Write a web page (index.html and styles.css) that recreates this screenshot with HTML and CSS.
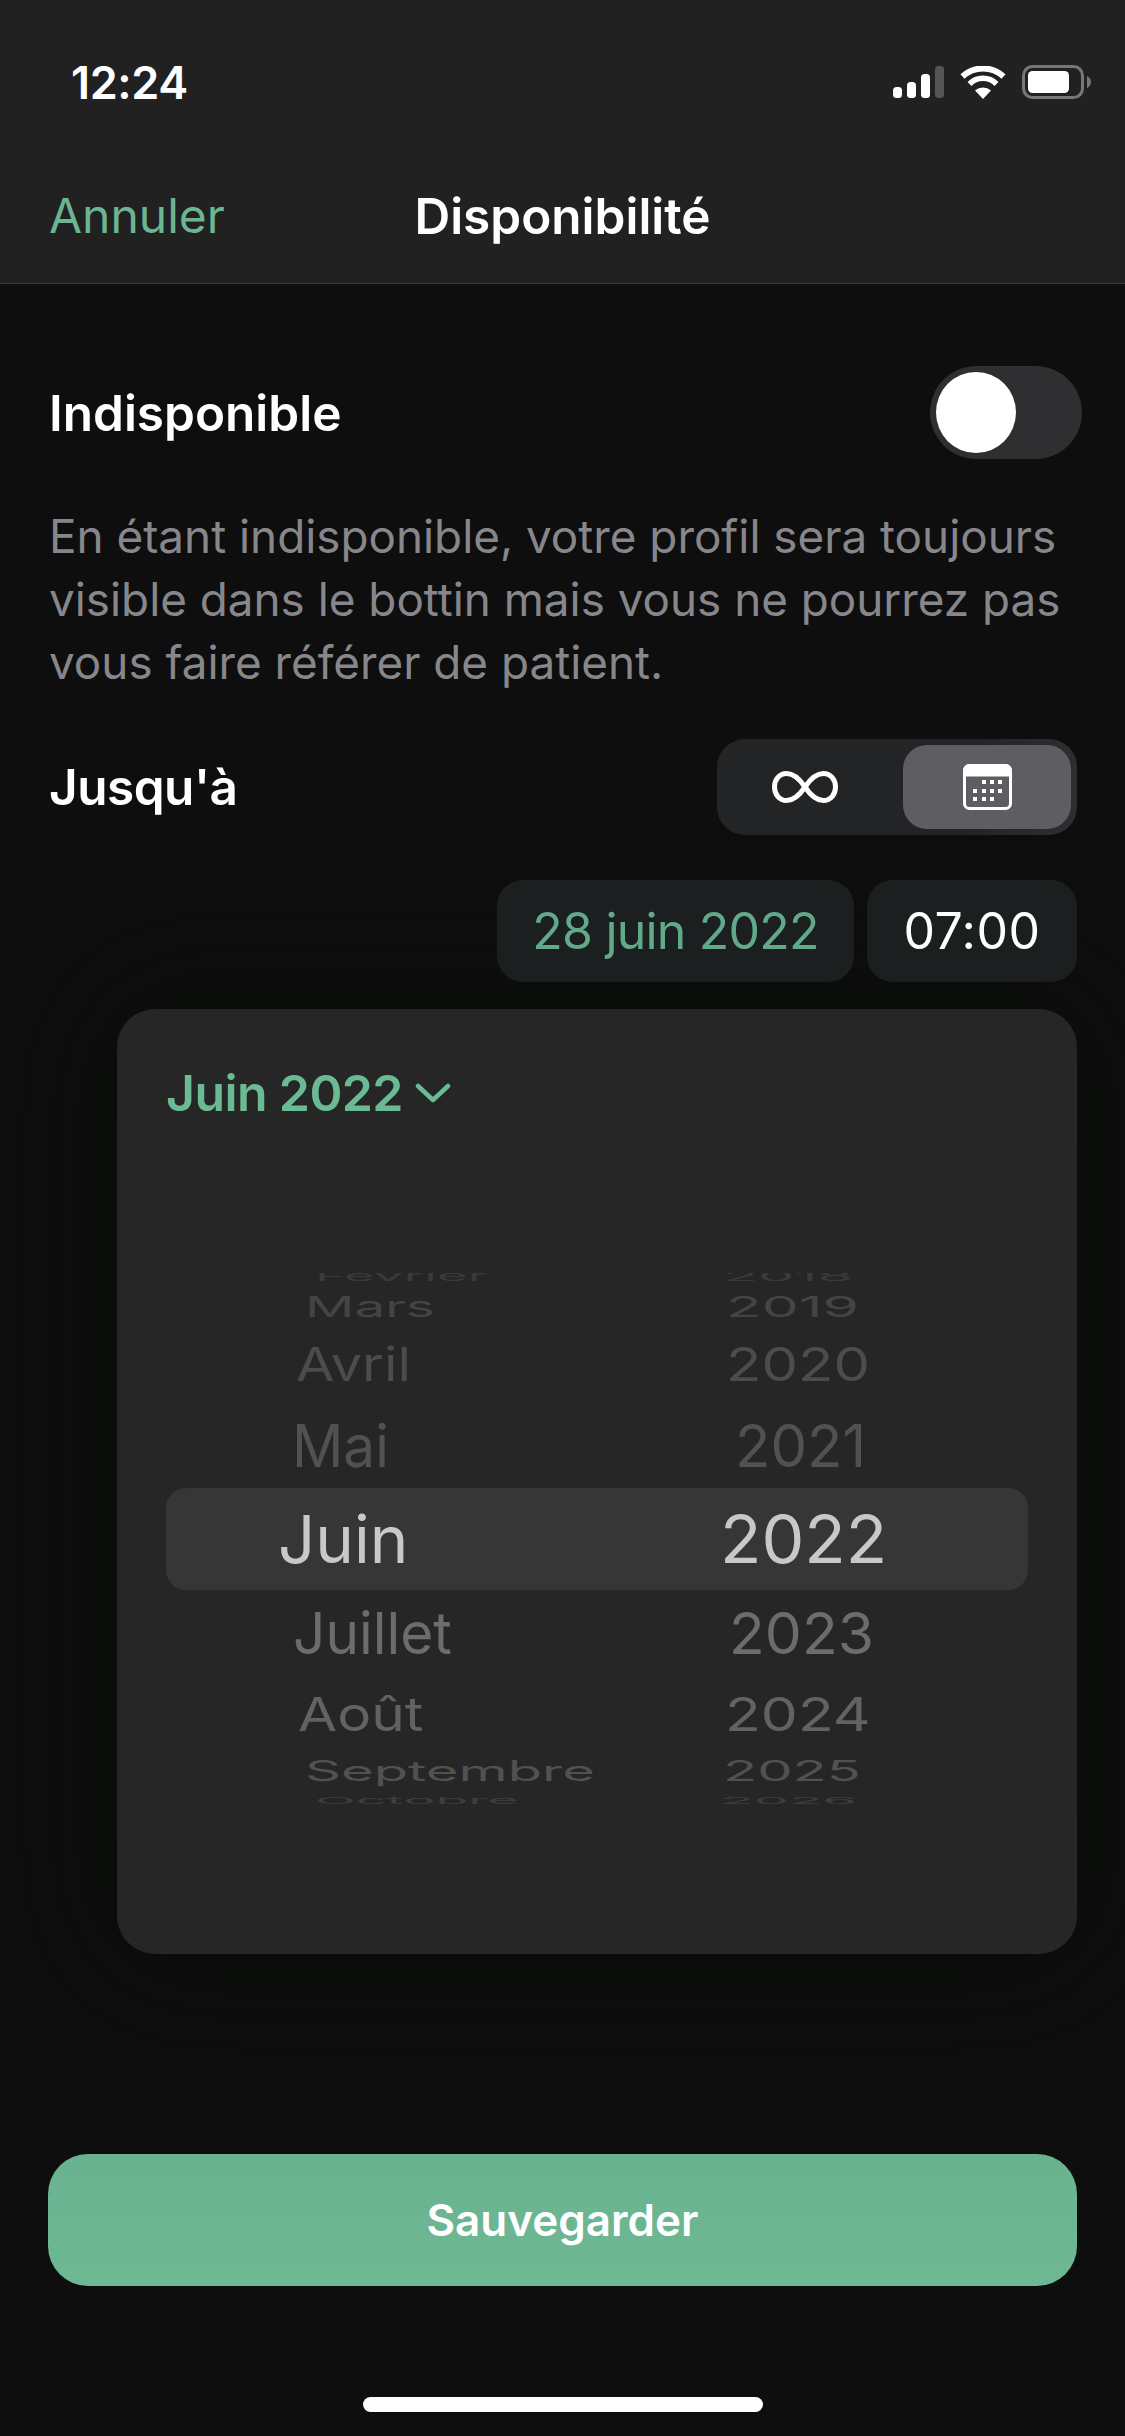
FILE: index.html
```html
<!DOCTYPE html>
<html lang="fr">
<head>
    <meta charset="UTF-8">
    <meta name="viewport" content="width=device-width, initial-scale=1.0">
    <title>Disponibilité</title>
    <link rel="stylesheet" href="styles.css">
</head>
<body>
    <header class="header">
        <div class="statusbar">
            <span class="time">12:24</span>
            <div class="status-icons">
                <svg class="signal" width="51" height="32" viewBox="0 0 51 32">
                    <rect x="0" y="21" width="9" height="11" rx="3.5" fill="#fff"/>
                    <rect x="14" y="16" width="9" height="16" rx="3.5" fill="#fff"/>
                    <rect x="28" y="8" width="9" height="24" rx="3.5" fill="#fff"/>
                    <rect x="42" y="0" width="9" height="32" rx="3.5" fill="#555"/>
                </svg>
                <svg class="wifi" width="46" height="33" viewBox="0 0 46 33">
                    <path d="M23 33 L15 24.5 A12 12 0 0 1 31 24.5 Z" fill="#fff"/>
                    <path d="M9.5 18 A19 19 0 0 1 36.5 18" fill="none" stroke="#fff" stroke-width="5.5"/>
                    <path d="M2.5 10.5 A30 30 0 0 1 43.5 10.5" fill="none" stroke="#fff" stroke-width="6"/>
                </svg>
                <svg class="battery" width="69" height="34" viewBox="0 0 69 34">
                    <rect x="1.5" y="1.5" width="59" height="31" rx="9" fill="none" stroke="#777" stroke-width="3"/>
                    <rect x="6" y="6" width="41" height="22" rx="4.5" fill="#fff"/>
                    <path d="M65 11 C67.5 12 69 14.5 69 17 C69 19.5 67.5 22 65 23 Z" fill="#777"/>
                </svg>
            </div>
        </div>
        <nav class="navbar">
            <a class="cancel">Annuler</a>
            <h1>Disponibilité</h1>
            <span></span>
        </nav>
    </header>

    <main class="content">
        <div class="row toggle-row">
            <span class="label">Indisponible</span>
            <div class="toggle"><div class="knob"></div></div>
        </div>

        <p class="hint">En étant indisponible, votre profil sera toujours visible dans le bottin mais vous ne pourrez pas vous faire référer de patient.</p>

        <div class="row until-row">
            <span class="label">Jusqu'à</span>
            <div class="segment">
                <div class="segment-item">
                    <svg class="infinity" width="66" height="32" viewBox="0 0 66 32">
                        <path d="M33 16 C27 7 21 2.5 14.5 2.5 C7.5 2.5 2.5 8.5 2.5 16 C2.5 23.5 7.5 29.5 14.5 29.5 C21 29.5 27 25 33 16 C39 7 45 2.5 51.5 2.5 C58.5 2.5 63.5 8.5 63.5 16 C63.5 23.5 58.5 29.5 51.5 29.5 C45 29.5 39 25 33 16 Z" fill="none" stroke="#fff" stroke-width="5"/>
                    </svg>
                </div>
                <div class="segment-item selected">
                    <svg width="49" height="46" viewBox="0 0 49 46">
                        <rect x="1.5" y="1.5" width="46" height="43" rx="5" fill="#5e5e62" stroke="#fff" stroke-width="3"/>
                        <path d="M1.5 11 V6.5 A5 5 0 0 1 6.5 1.5 H42.5 A5 5 0 0 1 47.5 6.5 V11 Z" fill="#fff" stroke="#fff" stroke-width="3"/>
                        <g fill="#fff">
                            <rect x="19" y="16" width="4" height="4"/><rect x="27" y="16" width="4" height="4"/><rect x="35" y="16" width="4" height="4"/>
                            <rect x="10" y="25" width="4" height="4"/><rect x="19" y="25" width="4" height="4"/><rect x="27" y="25" width="4" height="4"/><rect x="35" y="25" width="4" height="4"/>
                            <rect x="10" y="33" width="4" height="4"/><rect x="19" y="33" width="4" height="4"/><rect x="27" y="33" width="4" height="4"/>
                        </g>
                    </svg>
                </div>
            </div>
        </div>

        <div class="date-row">
            <div class="chip chip-date">28 juin 2022</div>
            <div class="chip chip-time">07:00</div>
        </div>

        <section class="card">
            <div class="card-title">
                <span>Juin 2022</span>
                <svg width="36" height="20" viewBox="0 0 36 20">
                    <path d="M3 3 L18 17 L33 3" fill="none" stroke="#6abb93" stroke-width="4.5" stroke-linecap="round" stroke-linejoin="round"/>
                </svg>
            </div>
            <div class="wheel">
                <div class="wheel-row fev"><span class="month">Février</span><span class="year">2018</span></div>
                <div class="wheel-row mars"><span class="month">Mars</span><span class="year">2019</span></div>
                <div class="wheel-row avril"><span class="month">Avril</span><span class="year">2020</span></div>
                <div class="wheel-row mai"><span class="month">Mai</span><span class="year">2021</span></div>
                <div class="wheel-row juin"><span class="month">Juin</span><span class="year">2022</span></div>
                <div class="wheel-row juillet"><span class="month">Juillet</span><span class="year">2023</span></div>
                <div class="wheel-row aout"><span class="month">Août</span><span class="year">2024</span></div>
                <div class="wheel-row sept"><span class="month">Septembre</span><span class="year">2025</span></div>
                <div class="wheel-row oct"><span class="month">Octobre</span><span class="year">2026</span></div>
            </div>
        </section>

        <button class="save">Sauvegarder</button>
    </main>

    <div class="home-indicator"></div>
</body>
</html>
```

FILE: styles.css
```css
* {
    box-sizing: border-box;
}

body {
    font-family: Inter, "Noto Sans", sans-serif;
    background: #0e0e0e;
    color: #fff;
    margin: 0;
    height: 2436px;
    width: 1125px;
    overflow: hidden;
}

.header {
    background: #212121;
    height: 284px;
    border-bottom: 1px solid #3a3a3a;
}

.statusbar {
    height: 164px;
    display: flex;
    align-items: center;
    justify-content: space-between;
    padding: 0 34px 0 71px;
}

.time {
    font-size: 45px;
    font-weight: 600;
    letter-spacing: -0.4px;
}

.status-icons {
    display: flex;
    align-items: center;
    gap: 16px;
}

.navbar {
    height: 103px;
    display: grid;
    grid-template-columns: 1fr auto 1fr;
    align-items: center;
    padding: 0 49px;
}

.cancel {
    font-size: 48px;
    color: #6cb592;
}

h1 {
    font-size: 49.5px;
    font-weight: 600;
    margin: 0;
}

.content {
    padding: 82px 49px 0;
}

.row {
    display: flex;
    align-items: center;
    justify-content: space-between;
}

.label {
    font-size: 49.5px;
    font-weight: 600;
}

.toggle-row {
    height: 93px;
}

.toggle {
    width: 152px;
    height: 93px;
    border-radius: 47px;
    background: #2f2f31;
    padding: 6px;
    margin-right: -6px;
}

.knob {
    width: 80px;
    height: 81px;
    border-radius: 50%;
    background: #fff;
}

.hint {
    font-size: 45.8px;
    line-height: 63px;
    color: #87878b;
    margin: 46px -10px 45px 0;
}

.until-row {
    height: 96px;
}

.until-row .label {
    letter-spacing: -0.5px;
}

.segment {
    width: 360px;
    height: 96px;
    margin-right: -1px;
    border-radius: 28px;
    background: linear-gradient(90deg, #232426 70%, #2e2e30);
    padding: 6px;
    display: flex;
    justify-content: space-between;
}

.segment-item {
    width: 168px;
    display: flex;
    align-items: center;
    justify-content: center;
}

.infinity {
    margin-right: 4px;
}

.segment-item.selected {
    background: #5e5e62;
    border-radius: 24px;
}

.date-row {
    display: flex;
    justify-content: flex-end;
    gap: 13px;
    margin-top: 45px;
    margin-right: -1px;
}

.chip {
    height: 102px;
    border-radius: 26px;
    background: #1c1f1f;
    display: flex;
    align-items: center;
    justify-content: center;
    font-size: 50px;
}

.chip-date {
    width: 357px;
    color: #61a988;
    letter-spacing: -0.8px;
}

.chip-time {
    width: 210px;
    letter-spacing: 0.5px;
}

.card {
    width: 960px;
    height: 945px;
    margin: 27px -1px 0 auto;
    background: #262626;
    border-radius: 38px;
    box-shadow: 0 0 130px 30px rgba(6, 12, 6, 0.5);
    padding: 54px 49px 0;
}

.card-title {
    display: flex;
    align-items: center;
    gap: 12px;
    font-size: 50px;
    font-weight: 600;
    letter-spacing: -0.6px;
    color: #6abb93;
    height: 60px;
}

.wheel {
    margin-top: 150px;
    height: 539px;
    overflow: hidden;
}

.wheel-row {
    display: grid;
    grid-template-columns: 557px 1fr;
    grid-template-rows: 100%;
    align-items: center;
}

.month,
.year {
    display: block;
    width: max-content;
    font-size: 66px;
    line-height: 70px;
    transform-origin: left center;
    color: var(--ink);
}

.month {
    transform: scale(var(--mx), var(--sy));
}

.year {
    transform: scale(var(--yx), var(--sy));
}

/* far rows get squashed like a drum */
.fev { height: 20px; margin-top: -7px; --sy: 0.2; --mx: 0.8; --yx: 0.87; --ink: #3a3a3a; }
.mars { height: 40px; --sy: 0.44; --mx: 0.83; --yx: 0.887; --ink: #444; }
.avril { height: 76px; --sy: 0.71; --mx: 0.845; --yx: 0.88; --ink: #4c4c4c; }
.mai { height: 86px; --sy: 0.9; --mx: 0.86; --yx: 0.88; --ink: #515151; }
.juin { height: 102px; --sy: 1; --mx: 0.99; --yx: 1.03; --ink: #c8c8c8; background: #363636; border-radius: 20px; }
.juillet { height: 86px; --sy: 0.88; --mx: 0.86; --yx: 0.89; --ink: #6c6c6c; }
.aout { height: 76px; --sy: 0.71; --mx: 0.86; --yx: 0.89; --ink: #626262; }
.sept { height: 38px; --sy: 0.42; --mx: 0.85; --yx: 0.85; --ink: #515151; }
.oct { height: 22px; --sy: 0.14; --mx: 0.81; --yx: 0.84; --ink: #3e3e3e; }

.fev .month { margin-left: 149px; }
.mars .month { margin-left: 139px; }
.avril .month { margin-left: 130px; }
.mai .month { margin-left: 126px; }
.juin .month { margin-left: 112px; }
.juillet .month { margin-left: 127px; }
.aout .month { margin-left: 132px; }
.sept .month { margin-left: 139px; }
.oct .month { margin-left: 149px; }

.fev .year { margin-left: 0; }
.mars .year { margin-left: 3px; }
.avril .year { margin-left: 3px; }
.mai .year { margin-left: 12px; }
.juin .year { margin-left: -3px; }
.juillet .year { margin-left: 6px; }
.aout .year { margin-left: 2px; }
.sept .year { margin-left: 0; }
.oct .year { margin-left: -3px; }

.save {
    display: block;
    width: 1029px;
    height: 132px;
    margin: 200px 0 0 -1px;
    border: none;
    border-radius: 40px;
    background: linear-gradient(#69b290, #6eb994);
    color: #fff;
    font-family: inherit;
    font-size: 44px;
    font-weight: 600;
}

.home-indicator {
    width: 400px;
    height: 15px;
    border-radius: 8px;
    background: #fff;
    margin: 111px auto 0;
}
```
